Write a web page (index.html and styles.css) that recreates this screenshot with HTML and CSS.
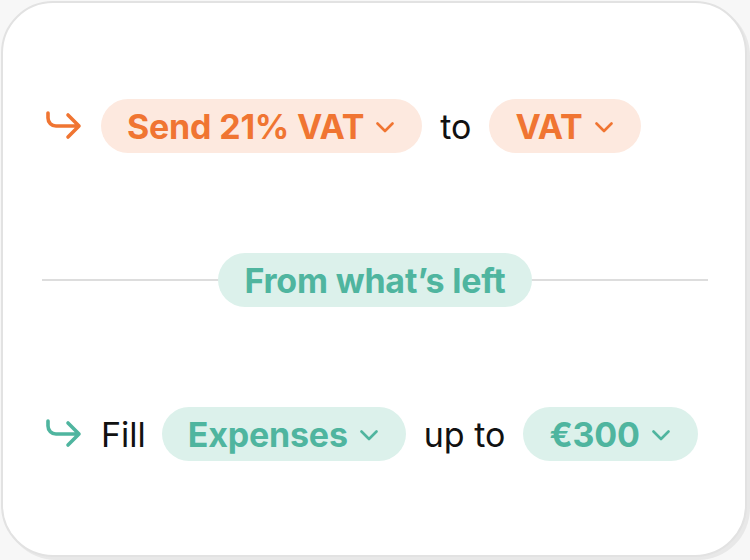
FILE: index.html
```html
<!DOCTYPE html>
<html>
<head>
<meta charset="utf-8">
<link rel="stylesheet" href="styles.css">
</head>
<body>
<div class="card">
  <div class="row">
    <svg class="arrow orange" viewBox="0 0 36 32" width="36" height="32"><path d="M2 3 V8 A8 8 0 0 0 10 16 H33 M22 5 L33 16 L22 27" fill="none" stroke="currentColor" stroke-width="3.6" stroke-linecap="round" stroke-linejoin="round"/></svg>
    <span class="pill pill-orange">Send 21% VAT<svg class="chev" viewBox="0 0 18 11" width="18" height="11"><path d="M1.5 1.5 L9 9 L16.5 1.5" fill="none" stroke="currentColor" stroke-width="2.6" stroke-linecap="round" stroke-linejoin="round"/></svg></span>
    <span class="word">to</span>
    <span class="pill pill-orange">VAT<svg class="chev" viewBox="0 0 18 11" width="18" height="11"><path d="M1.5 1.5 L9 9 L16.5 1.5" fill="none" stroke="currentColor" stroke-width="2.6" stroke-linecap="round" stroke-linejoin="round"/></svg></span>
  </div>
  <div class="divider">
    <span class="pill pill-teal label">From what’s left</span>
  </div>
  <div class="row">
    <svg class="arrow teal" viewBox="0 0 36 32" width="36" height="32"><path d="M2 3 V8 A8 8 0 0 0 10 16 H33 M22 5 L33 16 L22 27" fill="none" stroke="currentColor" stroke-width="3.6" stroke-linecap="round" stroke-linejoin="round"/></svg>
    <span class="word fill">Fill</span>
    <span class="pill pill-teal">Expenses<svg class="chev" viewBox="0 0 18 11" width="18" height="11"><path d="M1.5 1.5 L9 9 L16.5 1.5" fill="none" stroke="currentColor" stroke-width="2.6" stroke-linecap="round" stroke-linejoin="round"/></svg></span>
    <span class="word">up to</span>
    <span class="pill pill-teal">€300<svg class="chev" viewBox="0 0 18 11" width="18" height="11"><path d="M1.5 1.5 L9 9 L16.5 1.5" fill="none" stroke="currentColor" stroke-width="2.6" stroke-linecap="round" stroke-linejoin="round"/></svg></span>
  </div>
</div>
</body>
</html>
```
FILE: styles.css
```css
html, body {
  margin: 0;
  padding: 0;
  background: #f7f7f7;
  width: 750px;
  height: 560px;
  overflow: hidden;
}
body {
  padding: 1px 0 0 1px;
  box-sizing: border-box;
  font-family: Inter, "Noto Sans", sans-serif;
}
.card {
  width: 746px;
  height: 556px;
  box-sizing: border-box;
  background: #fff;
  border: 2px solid #e2e2e2;
  border-radius: 52px;
  box-shadow: 3px 3px 0 #e8e8e8;
  padding: 96px 37px 0 39px;
  display: flex;
  flex-direction: column;
  gap: 100px;
}
.row {
  display: flex;
  align-items: center;
  height: 54px;
  gap: 18px;
}
.arrow {
  display: block;
  margin-left: 4px;
  margin-right: 1px;
  flex: none;
}
.orange { color: #f07532; }
.teal { color: #4fb59f; }
.pill {
  display: inline-flex;
  align-items: center;
  height: 54px;
  box-sizing: border-box;
  border-radius: 27px;
  padding: 0 28px 0 26px;
  font-size: 34px;
  font-weight: 700;
  letter-spacing: -0.2px;
  white-space: nowrap;
}
.pill-orange {
  background: #fde9df;
  color: #f07532;
}
.pill-teal {
  background: #dcf1eb;
  color: #4fb59f;
}
.chev {
  display: block;
  margin-left: 12px;
  margin-top: 2px;
}
.word {
  font-size: 34px;
  font-weight: 400;
  color: #111;
  letter-spacing: 0;
}
.fill {
  margin-right: -2px;
}
.divider {
  height: 54px;
  display: flex;
  align-items: center;
  justify-content: center;
  background: linear-gradient(#dddddd, #dddddd) center / 100% 2px no-repeat;
}
.label {
  padding: 0 26px;
}
```
